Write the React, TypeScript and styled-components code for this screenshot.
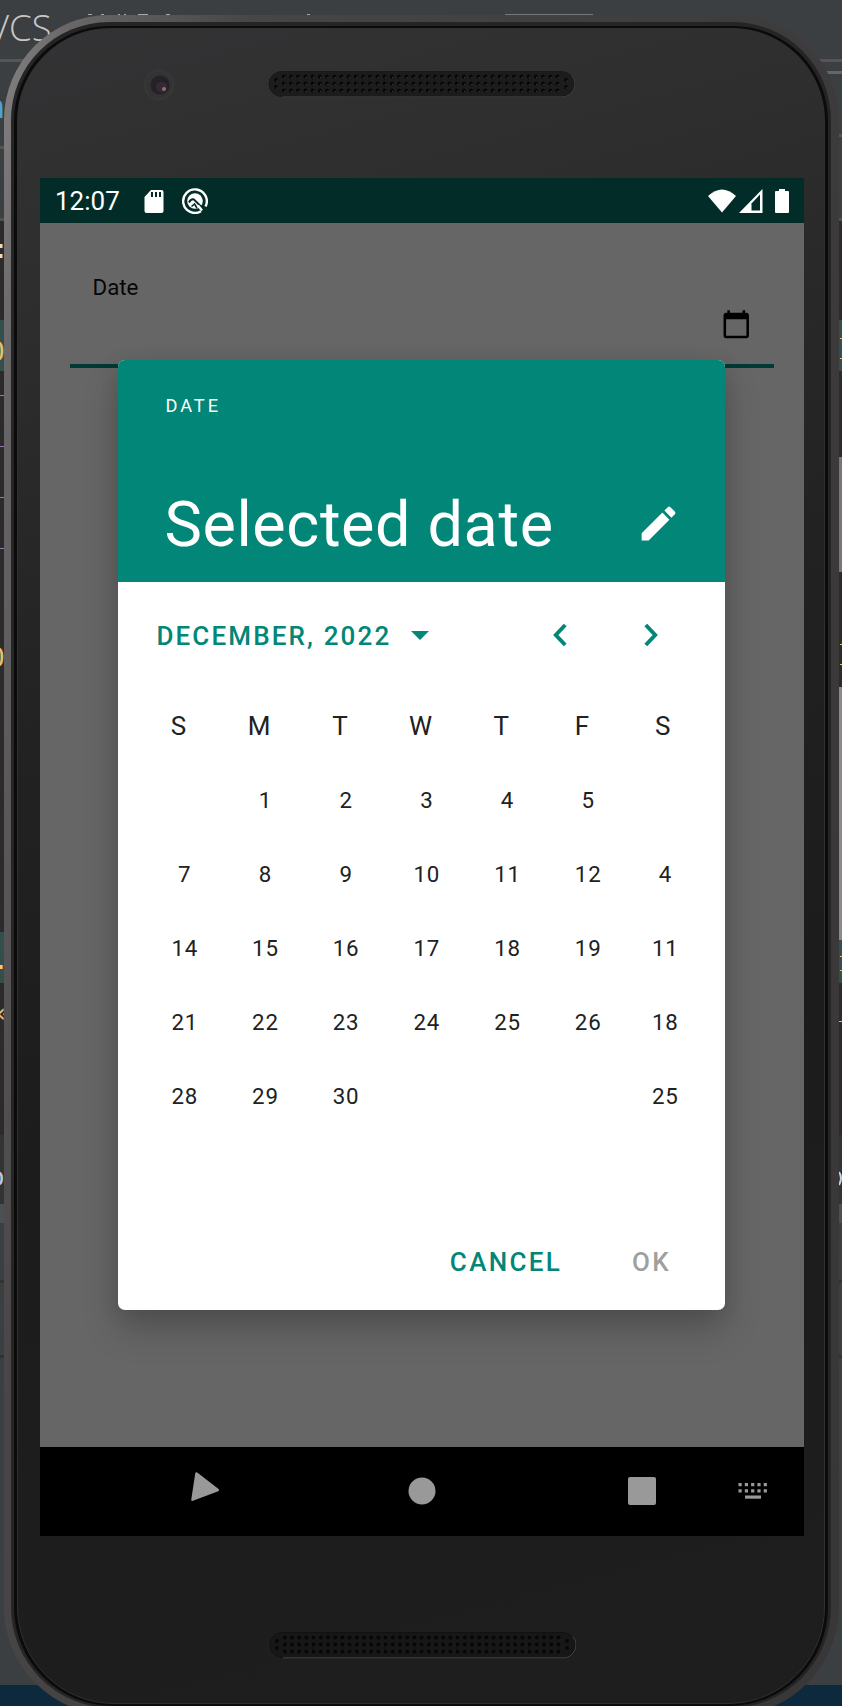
import React from "react";
import styled, { createGlobalStyle } from "styled-components";

const TEAL = "#018677";

const GlobalStyle = createGlobalStyle`
  * { box-sizing: border-box; }
  html, body { margin: 0; padding: 0; background: #3c3f41; }
  body { font-family: Roboto, "Liberation Sans", sans-serif; }
  button { font: inherit; border: 0; padding: 0; background: none; }
`;

const Desktop = styled.main`
  position: relative;
  width: 842px;
  height: 1706px;
  overflow: hidden;
  padding: 15px 3px 0 4px;
  background: #3c3f41;
`;

const EditorEdge = styled.div<{ $side: "left" | "right" }>`
  position: absolute;
  top: 0;
  ${(p) => (p.$side === "left" ? "left: 0;" : "right: 0;")}
  width: 90px;
  height: 1706px;
  display: flex;
  flex-direction: column;
  overflow: hidden;
`;

const Band = styled.div<{ $h: number; $c: string }>`
  flex: none;
  height: ${(p) => p.$h}px;
  background: ${(p) => p.$c};
`;

const MenuBar = styled.div`
  position: absolute;
  top: -1px;
  left: -12px;
  color: #c8c8c8;
  font: 300 36.5px/56px "Open Sans", "Noto Sans", sans-serif;
  white-space: nowrap;
`;

const EdgeMarks = styled.svg`
  position: absolute;
  top: 0;
  left: 0;
  width: 842px;
  height: 1706px;
  fill: none;
`;

const CodeBit = styled.span<{ $y: number; $x: number; $c: string; $s?: number }>`
  position: absolute;
  left: ${(p) => p.$x}px;
  top: ${(p) => p.$y}px;
  color: ${(p) => p.$c};
  font: ${(p) => p.$s ?? 26}px/30px "DejaVu Sans Mono", monospace;
`;

const Phone = styled.section`
  position: relative;
  width: 835px;
  height: 1700px;
  border-radius: 105px 105px 108px 108px;
  padding: 7px 8px 7px 7px;
  background: linear-gradient(100deg, #858384 0, #686667 6%, #484547 22%, #403d3f 60%, #383637 100%);
`;

const Rim = styled.div`
  height: 100%;
  border-radius: 98px 98px 101px 101px;
  padding: 4px 3px 2px 3px;
  background: #252525;
`;

const Groove = styled.div`
  height: 100%;
  border-radius: 95px 95px 99px 99px;
  padding: 2px 3px;
  background: #0b0b0b;
`;

const Face = styled.div`
  height: 100%;
  border-radius: 93px 93px 97px 97px;
  border: 1px solid #303031;
  padding: 1px 18px 0 22px;
  display: flex;
  flex-direction: column;
  background: linear-gradient(165deg, #333335 0, #2e2e2e 14%, #222222 38%, #1c1c1c 60%, #1e1e1e 100%);
`;

const TopBezel = styled.div`
  flex: none;
  height: 148px;
  display: flex;
  align-items: flex-start;
  padding: 39px 0 0 103px;
`;

const Speakers = styled.svg<{ $ml: number }>`
  display: block;
  width: 307px;
  height: 28px;
  margin-top: 1px;
  margin-left: ${(p) => p.$ml}px;
`;

const Camera = styled.svg`
  display: block;
  width: 32px;
  height: 32px;
`;

const Screen = styled.div`
  position: relative;
  flex: none;
  width: 764px;
  height: 1358px;
  display: flex;
  flex-direction: column;
`;

const StatusBar = styled.header`
  flex: none;
  height: 44.5px;
  display: flex;
  align-items: center;
  padding: 3px 15px 0 15px;
  background: #012c27;
  color: #fff;
`;

const Clock = styled.span`
  width: 89px;
  margin-top: -2px;
  font-size: 26px;
  line-height: 30px;
`;

const StatusIcon = styled.svg<{ $w: number; $ml?: number }>`
  flex: none;
  width: ${(p) => p.$w}px;
  height: 26px;
  margin-left: ${(p) => p.$ml ?? 0}px;
  margin-top: -2px;
`;

const Spacer = styled.div`
  flex: 1;
`;

const AppArea = styled.div`
  flex: 1;
  padding: 31.5px 30px 0;
  background: #666666;
  overflow: hidden;
`;

const DateField = styled.div`
  height: 114px;
  padding: 18px 22.5px 0 22.5px;
  display: flex;
  justify-content: space-between;
  border-bottom: 4px solid #013a33;
  color: #070707;
`;

const FieldLabel = styled.label`
  font-size: 22.3px;
  line-height: 30px;
`;

const CalendarIcon = styled.svg`
  width: 30.5px;
  height: 30.5px;
  margin-top: 36.5px;
`;

const Dialog = styled.section`
  position: absolute;
  left: 78.4px;
  top: 182px;
  width: 606.6px;
  height: 950px;
  display: flex;
  flex-direction: column;
  border-radius: 7px;
  overflow: hidden;
  background: #fff;
  box-shadow: 0 20px 36px rgba(0, 0, 0, 0.2), 0 4px 20px rgba(0, 0, 0, 0.1);
`;

const DialogHeader = styled.header`
  flex: none;
  height: 222.4px;
  padding: 34px 46px 0 47px;
  background: ${TEAL};
  color: #fff;
`;

const Overline = styled.div`
  font-size: 18.2px;
  line-height: 24px;
  letter-spacing: 3px;
`;

const TitleRow = styled.div`
  display: flex;
  align-items: center;
  justify-content: space-between;
  margin-top: 65px;
  height: 80px;
`;

const Title = styled.h1`
  margin: 3px 0 0 -1px;
  font-size: 63px;
  font-weight: 400;
  line-height: 80px;
  letter-spacing: 0.6px;
  white-space: nowrap;
`;

const EditIcon = styled.svg`
  width: 45px;
  height: 45px;
  margin-right: -2px;
`;

const MonthRow = styled.div`
  flex: none;
  display: flex;
  align-items: center;
  height: 106.4px;
  padding-left: 38px;
  color: ${TEAL};
`;

const MonthButton = styled.button`
  flex: none;
  display: flex;
  align-items: center;
  width: 397px;
  color: inherit;
  font-size: 26px;
  font-weight: 500;
  line-height: 32px;
  letter-spacing: 2.15px;
  white-space: nowrap;
`;

const DropArrow = styled.svg`
  width: 18px;
  height: 9px;
  margin-left: 20px;
`;

const Pager = styled.div`
  display: flex;
  gap: 76.500px;
  margin-top: -2px;
`;

const Chevron = styled.svg`
  width: 14px;
  height: 24px;
`;

const WeekRow = styled.div<{ $header?: boolean }>`
  flex: none;
  display: grid;
  grid-template-columns: repeat(7, 80.7px);
  height: 74.1px;
  align-items: center;
  padding-left: ${(p) => (p.$header ? 20 : 26)}px;
  color: #202122;
  font-size: ${(p) => (p.$header ? 26 : 22.3)}px;
  letter-spacing: ${(p) => (p.$header ? 0.4 : 0.8)}px;
  text-align: center;
`;

const Day = styled.span<{ $last?: boolean }>`
  padding-right: ${(p) => (p.$last ? 7 : 0)}px;
  white-space: nowrap;
`;

const Actions = styled.footer`
  display: flex;
  margin-top: auto;
  height: 96px;
  padding: 32px 54px 0 0;
  justify-content: flex-end;
  gap: 70px;
`;

const Action = styled.button<{ $disabled?: boolean }>`
  height: 32px;
  color: ${(p) => (p.$disabled ? "#9f9f9f" : TEAL)};
  font-size: 26px;
  font-weight: 500;
  line-height: 32px;
  letter-spacing: 2.3px;
`;

const NavBar = styled.nav`
  flex: none;
  height: 89px;
  display: flex;
  align-items: center;
  background: #000;
  padding-left: 150px;
`;

const NavIcon = styled.svg<{ $w: number; $ml?: number }>`
  flex: none;
  width: ${(p) => p.$w}px;
  height: 32px;
  margin-left: ${(p) => p.$ml ?? 0}px;
  margin-top: -1px;
  overflow: visible;
  fill: #999;
`;

const BottomBezel = styled.div`
  padding: 94px 0 0 228.5px;
`;

function SpeakerGrille({ ml = 0, dark = false }: { ml?: number; dark?: boolean }) {
  const cols = Array.from({ length: 39 }, (_, i) => 15.8 + i * 7.2);
  const holes: [number, number][] = [[8, 10], [8, 17], [298, 10], [298, 17]];
  cols.forEach((x) => [6.5, 13.5, 20.5].forEach((y) => holes.push([x, y])));
  return (
    <Speakers $ml={ml} viewBox="0 0 307 28">
      <rect x="1" y="1.5" width="305" height="25" rx="12.5" fill={dark ? "#171717" : "#1c1c1c"} stroke={dark ? "#111" : "#191919"} />
      <path d="M14 26.8H293.5A12.8 12.8 0 0 0 304 6" fill="none" stroke={dark ? "#444" : "#3c3c3c"} />
      {holes.map(([x, y], i) => (
        <g key={i}>
          <circle cx={x} cy={y} r="1.9" fill="#070707" />
          {!dark && <circle cx={x + 0.9} cy={y + 1} r="0.7" fill="#3d3d3d" />}
        </g>
      ))}
    </Speakers>
  );
}

const WEEKDAYS = ["S", "M", "T", "W", "T", "F", "S"];
const WEEKS = [
  ["", "1", "2", "3", "4", "5", ""],
  ["7", "8", "9", "10", "11", "12", "4"],
  ["14", "15", "16", "17", "18", "19", "11"],
  ["21", "22", "23", "24", "25", "26", "18"],
  ["28", "29", "30", "", "", "", "25"],
];

const TOOL_WINDOW: [number, string][] = [
  [69, "#313335"], [19, "#4b5152"], [57, "#3c3f41"], [3, "#323232"], [72, "#3c3f41"], [3, "#323232"],
  [327, "#3c3f41"], [21, "#0d293e"],
];
const LEFT_BANDS: [number, string][] = [
  [59, "#3c3f41"], [3, "#555555"], [84, "#3c3f41"], [3, "#555555"], [69, "#3c3f41"], [3, "#505050"],
  [99, "#2b2b2b"], [51, "#344f4b"], [561, "#2b2b2b"], [51, "#344f4b"], [152, "#2b2b2b"],
  ...TOOL_WINDOW,
];
const RIGHT_BANDS: [number, string][] = [
  [59, "#3c3f41"], [3, "#555555"], [9, "#3c3f41"], [3, "#666666"], [60, "#3c3f41"], [3, "#555555"], [81, "#3c3f41"], [3, "#505050"],
  [99, "#2b2b2b"], [51, "#344f4b"], [86, "#2b2b2b"], [115, "#777777"], [115, "#2b2b2b"], [253, "#8a8a8a"], [43, "#344f4b"], [152, "#2b2b2b"],
  ...TOOL_WINDOW,
];

export default function App() {
  return (
    <>
      <GlobalStyle />
      <Desktop>
        <EditorEdge $side="left">
          {LEFT_BANDS.map(([h, c], i) => <Band key={i} $h={h} $c={c} />)}
          <CodeBit $x={-14} $y={92} $s={32} $c="#4f9fd8">n</CodeBit>
          <CodeBit $x={-7} $y={234} $c="#dddddd">:</CodeBit>
          <CodeBit $x={-11} $y={337} $c="#e8bf6a">O</CodeBit>
          <CodeBit $x={-11} $y={643} $c="#e8bf6a">O</CodeBit>
          <CodeBit $x={-7} $y={945} $c="#ffc66d">.</CodeBit>
          <CodeBit $x={-4} $y={998} $c="#e8bf6a">«</CodeBit>
          <CodeBit $x={-11} $y={1162} $c="#bcc6dd">o</CodeBit>
        </EditorEdge>
        <EditorEdge $side="right">
          {RIGHT_BANDS.map(([h, c], i) => <Band key={i} $h={h} $c={c} />)}
        </EditorEdge>
        <MenuBar>VCS</MenuBar>
        <EdgeMarks viewBox="0 0 842 1706">
          <path d="M88 14.500h4M101 14.500h3M118 14.500h2M124 14.500h2M138 14.500h10M166 14.500h4M307 14.500h3" stroke="#a8a8a8" />
          <path d="M505 14.500h88" stroke="#777777" />
          <path d="M0 395.500h4M0 446.500h4M0 497.500h4M0 548.500h4" stroke="#9876aa" />
          <path d="M840 338.500h2M840 358.500h2M840 644.500h2M840 664.500h2M840 956.500h2M840 970.500h2M839 1021.500h3" stroke="#e8bf6a" />
          <path d="M839 1172q4 6 0 13" stroke="#c5d5e5" strokeWidth="2" />
        </EdgeMarks>
        <Phone>
          <Rim>
            <Groove>
              <Face>
                <TopBezel>
                  <Camera viewBox="0 0 32 32">
                    <circle cx="16" cy="16" r="15.5" fill="#373637" />
                    <circle cx="16" cy="16" r="13" fill="#343334" />
                    <circle cx="17" cy="16" r="9.5" fill="#242127" />
                    <circle cx="18.500" cy="18" r="5.500" fill="#332a35" />
                    <circle cx="21" cy="20" r="2" fill="#a06a68" />
                  </Camera>
                  <SpeakerGrille ml={93} />
                </TopBezel>
                <Screen>
                  <StatusBar>
                    <Clock>12:07</Clock>
                    <StatusIcon $w={20} viewBox="0 0 20 26" fill="#fff">
                      <path d="M7 2H17.5A2 2 0 0 1 19.500 4V23A2 2 0 0 1 17.500 25H2.500A2 2 0 0 1 .5 23V9Z" />
                      <path d="M8 4v5M12 4v5M16 4v5" stroke="#012c27" strokeWidth="2" />
                    </StatusIcon>
                    <StatusIcon $w={26} $ml={18} viewBox="0 0 26 26" fill="none">
                      <path d="M19 23.300A11.800 11.800 0 1 1 23.500 18.500" stroke="#fff" strokeWidth="2.400" />
                      <circle cx="13" cy="13" r="7.800" fill="#fff" />
                      <path d="M7 14.500Q9 10.500 12 11.500L21 20.500" stroke="#012c27" strokeWidth="2" />
                      <path d="M9.500 18.500L12.500 16L15 20" stroke="#012c27" strokeWidth="1.600" />
                      <path d="M16 17.500L20 22.500" stroke="#fff" strokeWidth="2.400" />
                    </StatusIcon>
                    <Spacer />
                    <StatusIcon $w={28} viewBox="0 0 28 26" fill="#fff"><path d="M0 8Q14-5 28 8L14 24.500Z" /></StatusIcon>
                    <StatusIcon $w={24} $ml={2.5} viewBox="0 0 24 26"><path d="M0 25L23.500 1V25Z" fill="#fff" /><path d="M12.500 15.500L21 6.500V22.500H12.500Z" fill="#012c27" /></StatusIcon>
                    <StatusIcon $w={14} $ml={12.5} viewBox="0 0 14 26" fill="#fff"><path d="M4 1H10V3H13Q14 3 14 4V24Q14 25 13 25H1Q0 25 0 24V4Q0 3 1 3H4Z" /></StatusIcon>
                  </StatusBar>
                  <AppArea>
                    <DateField>
                      <FieldLabel>Date</FieldLabel>
                      <CalendarIcon viewBox="0 0 24 24" fill="#000">
                        <path d="M20 3h-1V1h-2v2H7V1H5v2H4c-1.100 0-2 .9-2 2v16c0 1.100.9 2 2 2h16c1.100 0 2-.9 2-2V5c0-1.100-.9-2-2-2zm0 18H4V8h16v13z" />
                      </CalendarIcon>
                    </DateField>
                  </AppArea>
                  <NavBar>
                    <NavIcon $w={30} viewBox="0 0 30 32"><path d="M6.500 -1.600L27.800 15L2.500 24.700Z" stroke="#999" strokeWidth="2.500" strokeLinejoin="round" /></NavIcon>
                    <NavIcon $w={28} $ml={188} viewBox="0 0 28 32"><circle cx="14" cy="16" r="13.500" /></NavIcon>
                    <NavIcon $w={28} $ml={192} viewBox="0 0 28 32"><rect y="2" width="28" height="28" rx="2" /></NavIcon>
                    <NavIcon $w={30} $ml={82} viewBox="0 0 30 32">
                      {[0, 6.300, 12.600, 18.900, 25.200].map((x) => <path key={x} d={`M${x + 0.500} 8h3.200v3.200h-3.200zM${x + 0.500} 14.300h3.200v3.200h-3.200z`} />)}
                      <rect x="7" y="20.500" width="16" height="3.200" />
                    </NavIcon>
                  </NavBar>
                  <Dialog>
                    <DialogHeader>
                      <Overline>DATE</Overline>
                      <TitleRow>
                        <Title>Selected date</Title>
                        <EditIcon viewBox="0 0 24 24" fill="#fff">
                          <path d="M3 17.250V21h3.750L17.810 9.940l-3.750-3.750L3 17.250zM20.710 7.040c.39-.39.39-1.020 0-1.410l-2.340-2.340c-.39-.39-1.020-.39-1.410 0l-1.830 1.830 3.750 3.750 1.830-1.830z" />
                        </EditIcon>
                      </TitleRow>
                    </DialogHeader>
                    <MonthRow>
                      <MonthButton>
                        DECEMBER, 2022
                        <DropArrow viewBox="0 0 18 9"><path d="M0 0H18L9 9Z" fill={TEAL} /></DropArrow>
                      </MonthButton>
                      <Pager>
                        <Chevron viewBox="0 0 14 24"><path d="M12.200 2L2.800 12L12.200 22" fill="none" stroke={TEAL} strokeWidth="3.900" /></Chevron>
                        <Chevron viewBox="0 0 14 24"><path d="M1.800 2L11.200 12L1.800 22" fill="none" stroke={TEAL} strokeWidth="3.900" /></Chevron>
                      </Pager>
                    </MonthRow>
                    <WeekRow $header>
                      {WEEKDAYS.map((d, i) => <Day key={i}>{d}</Day>)}
                    </WeekRow>
                    {WEEKS.map((week, w) => (
                      <WeekRow key={w}>
                        {week.map((d, i) => <Day key={i} $last={i === 6}>{d}</Day>)}
                      </WeekRow>
                    ))}
                    <Actions>
                      <Action>CANCEL</Action>
                      <Action $disabled>OK</Action>
                    </Actions>
                  </Dialog>
                </Screen>
                <BottomBezel><SpeakerGrille dark /></BottomBezel>
              </Face>
            </Groove>
          </Rim>
        </Phone>
      </Desktop>
    </>
  );
}
